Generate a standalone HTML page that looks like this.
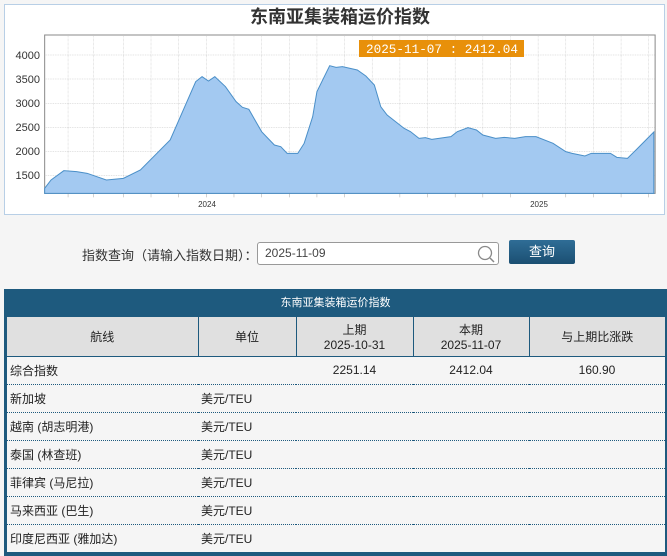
<!DOCTYPE html>
<html><head><meta charset="utf-8"><style>
body{margin:0;width:667px;height:555px;background:#f5f5f5;font-family:"Liberation Sans","Noto Sans CJK SC",sans-serif;position:relative;overflow:hidden}
.abs{position:absolute}
table{border-collapse:collapse;table-layout:fixed}
td{font-size:12px;color:#222;padding:0 3px}
</style></head><body>
<div class="abs" style="left:4px;top:4px;width:659px;height:209px;border:1px solid #b8cfe6;background:#fff"></div>
<svg class="abs" style="left:0;top:0" width="667" height="215">
<text x="340" y="23" text-anchor="middle" font-size="18" font-weight="bold" fill="#333" font-family="Liberation Sans,Noto Sans CJK SC,sans-serif">东南亚集装箱运价指数</text>
<g transform="scale(0.4254,0.33333)">
<rect x="105" y="105" width="1435" height="475" fill="#fff" stroke="#888" stroke-width="1" vector-effect="non-scaling-stroke"/>
<g stroke="#aaa" stroke-width="1" stroke-dasharray="2,2" vector-effect="non-scaling-stroke">
<line x1="160" y1="105" x2="160" y2="580"/><line x1="220" y1="105" x2="220" y2="580"/><line x1="290" y1="105" x2="290" y2="580"/><line x1="355" y1="105" x2="355" y2="580"/><line x1="420" y1="105" x2="420" y2="580"/><line x1="485" y1="105" x2="485" y2="580"/><line x1="550" y1="105" x2="550" y2="580"/><line x1="615" y1="105" x2="615" y2="580"/><line x1="680" y1="105" x2="680" y2="580"/><line x1="745" y1="105" x2="745" y2="580"/><line x1="810" y1="105" x2="810" y2="580"/><line x1="875" y1="105" x2="875" y2="580"/><line x1="940" y1="105" x2="940" y2="580"/><line x1="1005" y1="105" x2="1005" y2="580"/><line x1="1070" y1="105" x2="1070" y2="580"/><line x1="1135" y1="105" x2="1135" y2="580"/><line x1="1200" y1="105" x2="1200" y2="580"/><line x1="1265" y1="105" x2="1265" y2="580"/><line x1="1330" y1="105" x2="1330" y2="580"/><line x1="1395" y1="105" x2="1395" y2="580"/><line x1="1460" y1="105" x2="1460" y2="580"/><line x1="1525" y1="105" x2="1525" y2="580"/>
<line x1="105" y1="165" x2="1540" y2="165"/><line x1="105" y1="237" x2="1540" y2="237"/><line x1="105" y1="310" x2="1540" y2="310"/><line x1="105" y1="382" x2="1540" y2="382"/><line x1="105" y1="455" x2="1540" y2="455"/><line x1="105" y1="527" x2="1540" y2="527"/>
</g>
<polygon fill="#a3c9f1" stroke="#4a8fc8" stroke-width="1" vector-effect="non-scaling-stroke" points="105,580 105,565 120,540 150,512 180,515 205,520 250,540 290,535 330,510 400,420 460,245 475,230 490,243 505,230 530,260 555,305 570,322 585,328 615,395 645,435 660,440 675,460 700,460 715,430 735,350 745,275 775,197 790,202 805,200 840,210 860,228 880,255 895,320 910,345 950,385 965,395 985,415 1000,413 1015,418 1060,410 1075,395 1100,383 1120,390 1135,405 1165,415 1185,412 1210,415 1235,410 1260,410 1300,430 1330,455 1345,460 1375,468 1390,460 1435,460 1450,472 1475,475 1495,450 1537,396 1537,580"/>
<g stroke="#888" stroke-width="1" vector-effect="non-scaling-stroke"><line x1="160" y1="580" x2="160" y2="592"/><line x1="220" y1="580" x2="220" y2="592"/><line x1="290" y1="580" x2="290" y2="592"/><line x1="355" y1="580" x2="355" y2="592"/><line x1="420" y1="580" x2="420" y2="592"/><line x1="485" y1="580" x2="485" y2="592"/><line x1="550" y1="580" x2="550" y2="592"/><line x1="615" y1="580" x2="615" y2="592"/><line x1="680" y1="580" x2="680" y2="592"/><line x1="745" y1="580" x2="745" y2="592"/><line x1="810" y1="580" x2="810" y2="592"/><line x1="940" y1="580" x2="940" y2="592"/><line x1="1005" y1="580" x2="1005" y2="592"/><line x1="1070" y1="580" x2="1070" y2="592"/><line x1="1135" y1="580" x2="1135" y2="592"/><line x1="1200" y1="580" x2="1200" y2="592"/><line x1="1330" y1="580" x2="1330" y2="592"/><line x1="1395" y1="580" x2="1395" y2="592"/><line x1="1460" y1="580" x2="1460" y2="592"/><line x1="1525" y1="580" x2="1525" y2="592"/></g>
</g>
<g font-size="11" fill="#333" text-anchor="end"><text x="40" y="59">4000</text><text x="40" y="83">3500</text><text x="40" y="107">3000</text><text x="40" y="131">2500</text><text x="40" y="155">2000</text><text x="40" y="179">1500</text></g>
<g font-size="8" fill="#333" text-anchor="middle"><text x="207" y="207">2024</text><text x="539" y="207">2025</text></g>
<rect x="359" y="40" width="165" height="17" fill="#e8900a"/>
<text x="366" y="53" font-size="13" fill="#fff" textLength="152" lengthAdjust="spacingAndGlyphs" font-family="Liberation Mono,monospace">2025-11-07 : 2412.04</text>
</svg>
<div class="abs" style="left:82px;top:245px;font-size:13px;color:#333">指数查询（请输入指数日期）：</div>
<div class="abs" style="left:257px;top:242px;width:240px;height:21px;border:1px solid #999;border-radius:3px;background:#fff;font-size:12px;color:#444;line-height:21px;text-indent:7px">2025-11-09</div>
<svg class="abs" style="left:476px;top:244px" width="20" height="20"><circle cx="9" cy="9" r="6.5" fill="none" stroke="#888" stroke-width="1.3"/><line x1="14" y1="14" x2="18" y2="18" stroke="#888" stroke-width="1.5"/></svg>
<div class="abs" style="left:509px;top:240px;width:66px;height:24px;border-radius:2px;background:linear-gradient(#2f6d96,#1b4f72);color:#fff;font-size:13px;text-align:center;line-height:24px">查询</div>
<div class="abs" style="left:4px;top:289px;width:659px;height:263px;border:2px solid #1e5a7e;background:#1e5a7e">
<div style="height:24px;line-height:24px;text-align:center;color:#fff;font-size:11px">东南亚集装箱运价指数</div>
<table style="position:absolute;left:1px;top:26px;width:658px;background:#f5f5f5">
<colgroup><col style="width:191px"><col style="width:98px"><col style="width:117px"><col style="width:116px"><col></colgroup>
<tr style="height:39px;background:#e0e0e0;text-align:center;color:#444"><td style="border-right:1px solid #1e5a7e">航线</td><td style="border-right:1px solid #1e5a7e">单位</td><td style="border-right:1px solid #1e5a7e">上期<br>2025-10-31</td><td style="border-right:1px solid #1e5a7e">本期<br>2025-11-07</td><td>与上期比涨跌</td></tr>
<tr style="height:28px;border-top:1px solid #1e5a7e;border-bottom:1px dotted #1e5a7e"><td>综合指数</td><td></td><td style="text-align:center">2251.14</td><td style="text-align:center">2412.04</td><td style="text-align:center">160.90</td></tr>
<tr style="height:28px;border-bottom:1px dotted #1e5a7e"><td>新加坡</td><td>美元/TEU</td><td></td><td></td><td></td></tr>
<tr style="height:28px;border-bottom:1px dotted #1e5a7e"><td>越南 (胡志明港)</td><td>美元/TEU</td><td></td><td></td><td></td></tr>
<tr style="height:28px;border-bottom:1px dotted #1e5a7e"><td>泰国 (林查班)</td><td>美元/TEU</td><td></td><td></td><td></td></tr>
<tr style="height:28px;border-bottom:1px dotted #1e5a7e"><td>菲律宾 (马尼拉)</td><td>美元/TEU</td><td></td><td></td><td></td></tr>
<tr style="height:28px;border-bottom:1px dotted #1e5a7e"><td>马来西亚 (巴生)</td><td>美元/TEU</td><td></td><td></td><td></td></tr>
<tr style="height:28px"><td>印度尼西亚 (雅加达)</td><td>美元/TEU</td><td></td><td></td><td></td></tr>
</table></div>
</body></html>
